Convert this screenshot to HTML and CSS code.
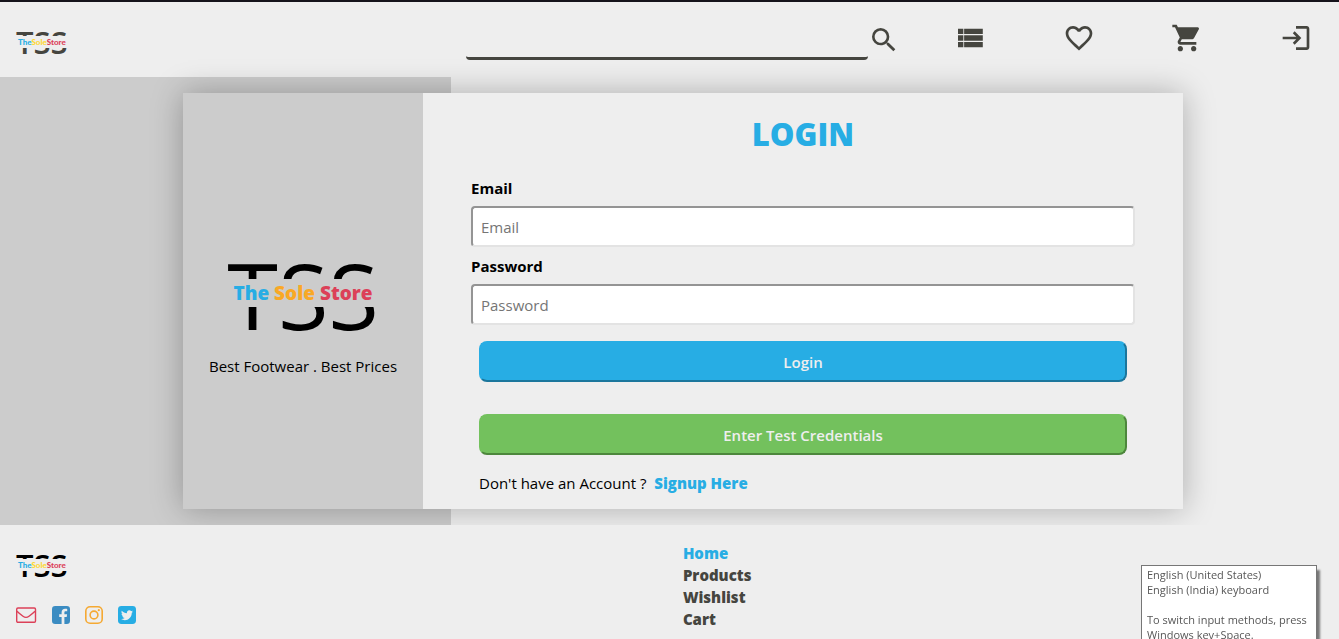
FILE: index.html
```html
<!DOCTYPE html>
<html lang="en">
<head>
<meta charset="utf-8">
<title>The Sole Store - Login</title>
<link rel="stylesheet" href="styles.css">
</head>
<body>
<header class="header">
  <a class="brand" href="#"><span class="brand-letters">TSS</span><span class="brand-name"><span class="blue">The</span><span class="yellow">Sole</span><span class="red">Store</span></span></a>
  <form class="search">
    <input class="search-input" type="search" aria-label="Search">
    <button class="icon-button" type="button" aria-label="Search"><svg class="icon" viewBox="0 0 24 24"><path d="M15.5 14h-.79l-.28-.27A6.47 6.47 0 0 0 16 9.500 6.500 6.500 0 1 0 9.500 16c1.610 0 3.090-.59 4.230-1.570l.27.28v.79l5 4.990L20.490 19l-4.990-5zm-6 0C7.010 14 5 11.990 5 9.500S7.010 5 9.500 5 14 7.010 14 9.500 11.990 14 9.500 14z"/></svg></button>
  </form>
  <nav class="nav">
    <a href="#" aria-label="Products"><svg class="icon" viewBox="0 0 24 24"><path d="M3 14h4v-4H3v4zm0 5h4v-4H3v4zM3 9h4V5H3v4zm4.600 5H21.600v-4H7.600v4zm0 5H21.600v-4H7.600v4zM7.600 5v4H21.600V5H7.600z"/></svg></a>
    <a href="#" aria-label="Wishlist"><svg class="icon" viewBox="0 0 24 24"><path d="M16.500 3c-1.740 0-3.410.81-4.500 2.090C10.910 3.810 9.240 3 7.500 3 4.420 3 2 5.420 2 8.500c0 3.780 3.400 6.860 8.550 11.540L12 21.350l1.450-1.320C18.600 15.360 22 12.280 22 8.500 22 5.420 19.580 3 16.500 3zm-4.400 15.550l-.1.100-.1-.100C7.140 14.240 4 11.390 4 8.500 4 6.500 5.500 5 7.500 5c1.540 0 3.040.99 3.570 2.360h1.870C13.460 5.990 14.960 5 16.500 5c2 0 3.500 1.500 3.500 3.500 0 2.890-3.140 5.740-7.900 10.050z"/></svg></a>
    <a href="#" aria-label="Cart"><svg class="icon" viewBox="0 0 24 24"><path d="M7 18c-1.100 0-1.990.9-1.990 2S5.900 22 7 22s2-.9 2-2-.9-2-2-2zM1 2v2h2l3.600 7.590-1.350 2.450c-.16.28-.25.61-.25.96 0 1.100.9 2 2 2h12v-2H7.420c-.14 0-.25-.11-.25-.25l.03-.12.9-1.630h7.450c.75 0 1.410-.41 1.750-1.030l3.580-6.490A1 1 0 0 0 20 4H5.210l-.94-2H1zm16 16c-1.100 0-1.990.9-1.990 2s.89 2 1.990 2 2-.9 2-2-.9-2-2-2z"/></svg></a>
    <a href="#" aria-label="Login"><svg class="icon" viewBox="0 0 24 24"><path d="M11 7L9.600 8.400l2.600 2.600H2v2h10.200l-2.600 2.600L11 17l5-5-5-5zm9 12h-8v2h8c1.100 0 2-.9 2-2V5c0-1.100-.9-2-2-2h-8v2h8v14z"/></svg></a>
  </nav>
</header>

<main class="main">
  <section class="card">
    <div class="intro">
      <div class="logo"><span class="logo-letters">TSS</span><span class="logo-name"><span class="blue">The</span> <span class="orange">Sole</span> <span class="red">Store</span></span></div>
      <p class="tagline">Best Footwear . Best Prices</p>
    </div>
    <form class="login">
      <h1 class="title">LOGIN</h1>
      <label class="label" for="email">Email</label>
      <input class="field" id="email" type="email" placeholder="Email">
      <label class="label" for="password">Password</label>
      <input class="field" id="password" type="password" placeholder="Password">
      <div class="actions">
        <button class="button button-login" type="button">Login</button>
        <button class="button button-test" type="button">Enter Test Credentials</button>
        <p class="signup">Don't have an Account ? <a href="#">Signup Here</a></p>
      </div>
    </form>
  </section>
</main>

<footer class="footer">
  <div class="footer-brand">
    <a class="brand brand-dark" href="#"><span class="brand-letters">TSS</span><span class="brand-name"><span class="blue">The</span><span class="yellow">Sole</span><span class="red">Store</span></span></a>
    <div class="social">
      <a href="#" aria-label="Mail"><svg class="mail" viewBox="0 0 21 18"><rect x="0.700" y="2" width="18.800" height="14.300" rx="1.200"/><path d="M1 5.200c2 2 4 3.500 6 5 2.200 1.700 3.800 1.700 6 0 2-1.500 4-3 6-5"/></svg></a>
      <a href="#" aria-label="Facebook"><svg class="facebook" viewBox="0 0 18 18"><path d="M3.200 0h11.600A3.200 3.200 0 0 1 18 3.200v11.600a3.200 3.200 0 0 1-3.200 3.200h-2.400v-7h2.300l.4-2.700h-2.700V6.600c0-.8.300-1.300 1.400-1.300h1.400V2.900c-.3 0-1.100-.1-2.100-.1-2.100 0-3.500 1.300-3.500 3.600v1.900H7.200V11h2.400v7H3.200A3.200 3.200 0 0 1 0 14.800V3.200A3.200 3.200 0 0 1 3.200 0z"/></svg></a>
      <a href="#" aria-label="Instagram"><svg class="instagram" viewBox="0 0 18 18"><rect x="0.800" y="0.800" width="16.400" height="16.400" rx="4.300"/><circle cx="9" cy="9" r="3.900"/><circle class="dot" cx="13.800" cy="4.200" r="1.100"/></svg></a>
      <a href="#" aria-label="Twitter"><svg class="twitter" viewBox="0 0 18 18"><rect width="18" height="18" rx="3.400"/><path d="M15 5.400c-.4.200-.9.300-1.400.4.500-.3.900-.8 1.100-1.400-.5.300-1 .5-1.600.6a2.500 2.500 0 0 0-4.200 2.300c-2-.1-3.800-1.100-5.100-2.600-.7 1.200-.3 2.600.8 3.300-.4 0-.8-.1-1.100-.3 0 1.200.8 2.200 2 2.500-.4.100-.7.100-1.100 0 .3 1 1.200 1.700 2.300 1.700A5 5 0 0 1 3 13c4.900 3.100 10.900-.5 10.800-6.300.5-.4.900-.8 1.200-1.300z"/></svg></a>
    </div>
  </div>
  <nav class="links">
    <a class="current" href="#">Home</a>
    <a href="#">Products</a>
    <a href="#">Wishlist</a>
    <a href="#">Cart</a>
  </nav>
</footer>

<div class="tooltip" role="tooltip">English (United States)<br>English (India) keyboard<br><br>To switch input methods, press Windows key+Space.</div>
</body>
</html>
```
FILE: styles.css
```css
* { box-sizing: border-box; }

body {
  margin: 0;
  border-top: 2px solid #15131b;
  background: #eee;
  color: #000;
  font: 15px/22px "Open Sans", "Noto Sans", sans-serif;
}

h1, p { margin: 0; }
a { color: inherit; text-decoration: none; }
button, input { font: inherit; }

.blue { color: #27ade4; }
.yellow { color: #fdd835; }
.orange { color: #f9a825; }
.red { color: #dc4058; }

.header {
  display: flex;
  align-items: center;
  height: 75px;
  padding: 0 27px 0 16px;
  color: #45453f;
}

.header .brand { margin-right: auto; padding-top: 4px; }

.brand {
  display: grid;
  width: max-content;
  place-items: center;
}

.brand-letters, .brand-name { grid-area: 1 / 1; }

.brand-letters { font-size: 31px; line-height: 32px; font-weight: 600; }

.brand-name {
  width: 100%;
  background: #eee;
  font-family: Lato, "Open Sans", sans-serif;
  font-size: 8px;
  line-height: 12px;
  font-weight: 900;
  text-align: center;
}

.brand-dark { color: #000; }

.search {
  display: flex;
  align-items: center;
  width: 434px;
  margin-right: 54px;
}

.search-input {
  flex: 1;
  min-width: 0;
  height: 40px;
  border: 0;
  border-bottom: 3px solid #45453f;
  border-radius: 4px;
  background: transparent;
}

.icon-button {
  display: flex;
  padding: 0;
  border: 0;
  background: none;
  color: inherit;
}

.icon {
  display: block;
  width: 32px;
  height: 32px;
  fill: currentColor;
}

.nav {
  display: flex;
  justify-content: space-between;
  width: 358px;
  padding-bottom: 4px;
}

.main {
  padding: 16px 0 16px 27px;
  background: linear-gradient(90deg, #ccc 451px, transparent 451px);
}

.card {
  display: flex;
  max-width: 1000px;
  margin: 0 auto;
  background: #eee;
  box-shadow: 0 0 30px rgba(0, 0, 0, 0.28);
}

.intro {
  display: flex;
  flex-direction: column;
  align-items: center;
  justify-content: center;
  gap: 8px;
  width: 240px;
  padding-top: 18px;
  background: #ccc;
}

.logo { display: grid; justify-items: stretch; align-items: center; }
.logo-letters, .logo-name { grid-area: 1 / 1; text-align: center; }
.logo-letters { font-size: 92px; line-height: 104px; }

.logo-name {
  margin-bottom: 5px;
  background: #ccc;
  font-size: 19px;
  line-height: 28px;
  font-weight: 800;
}

.login {
  flex: 1;
  display: flex;
  flex-direction: column;
  padding: 17px 48px 15px;
}

.title {
  margin-bottom: 19px;
  color: #27ade4;
  font-size: 31px;
  line-height: 48px;
  font-weight: 800;
  text-align: center;
}

.label { padding-bottom: 7px; font-weight: 700; }

.field {
  height: 41px;
  margin-bottom: 8px;
  padding: 0 8px;
  border: 2px solid;
  border-color: #949494 #e3e3e3 #e3e3e3 #949494;
  border-radius: 4px;
  background: #fff;
}

.field::placeholder { color: #757575; }

.actions {
  display: flex;
  flex-direction: column;
  padding: 8px 8px 0;
}

.button {
  height: 41px;
  border: 2px solid;
  border-radius: 8px;
  color: #eee;
  font-weight: 600;
}

.button-login {
  margin-bottom: 32px;
  border-color: #27ade4 #1b769c #1b769c #27ade4;
  background: #27ade4;
}

.button-test {
  margin-bottom: 17px;
  border-color: #73c15d #4d873c #4d873c #73c15d;
  background: #73c15d;
}

.signup a {
  margin-left: 4px;
  color: #27ade4;
  font-weight: 800;
}

.footer {
  position: relative;
  display: grid;
  grid-template-columns: 51% 1fr;
  padding: 17px 0 8px;
  background: #eee;
}

.footer-brand {
  display: flex;
  flex-direction: column;
  gap: 25px;
  padding: 7px 0 0 16px;
}

.social { display: flex; gap: 15px; }
.social svg { display: block; width: 18px; height: 18px; }
.social .mail { width: 21px; fill: none; stroke: #dc4058; stroke-width: 1.400px; }
.facebook { fill: #3b8cc2; }
.instagram { fill: none; stroke: #f5a933; stroke-width: 1.600px; }
.instagram .dot { fill: #f5a933; stroke: none; }
.twitter rect { fill: #27ade4; }
.twitter path { fill: #eee; }

.links {
  display: flex;
  flex-direction: column;
  color: #45453f;
  font-weight: 800;
}

.links .current { color: #27ade4; }

.tooltip {
  position: fixed;
  right: 22px;
  bottom: 0;
  width: 176px;
  height: 74px;
  overflow: hidden;
  padding: 1px 5px 0;
  border: 1px solid #767676;
  border-bottom: 0;
  background: #fff;
  box-shadow: 3px 5px 2px rgba(0, 0, 0, 0.5);
  color: #575757;
  font-size: 11px;
  line-height: 15px;
}
```
